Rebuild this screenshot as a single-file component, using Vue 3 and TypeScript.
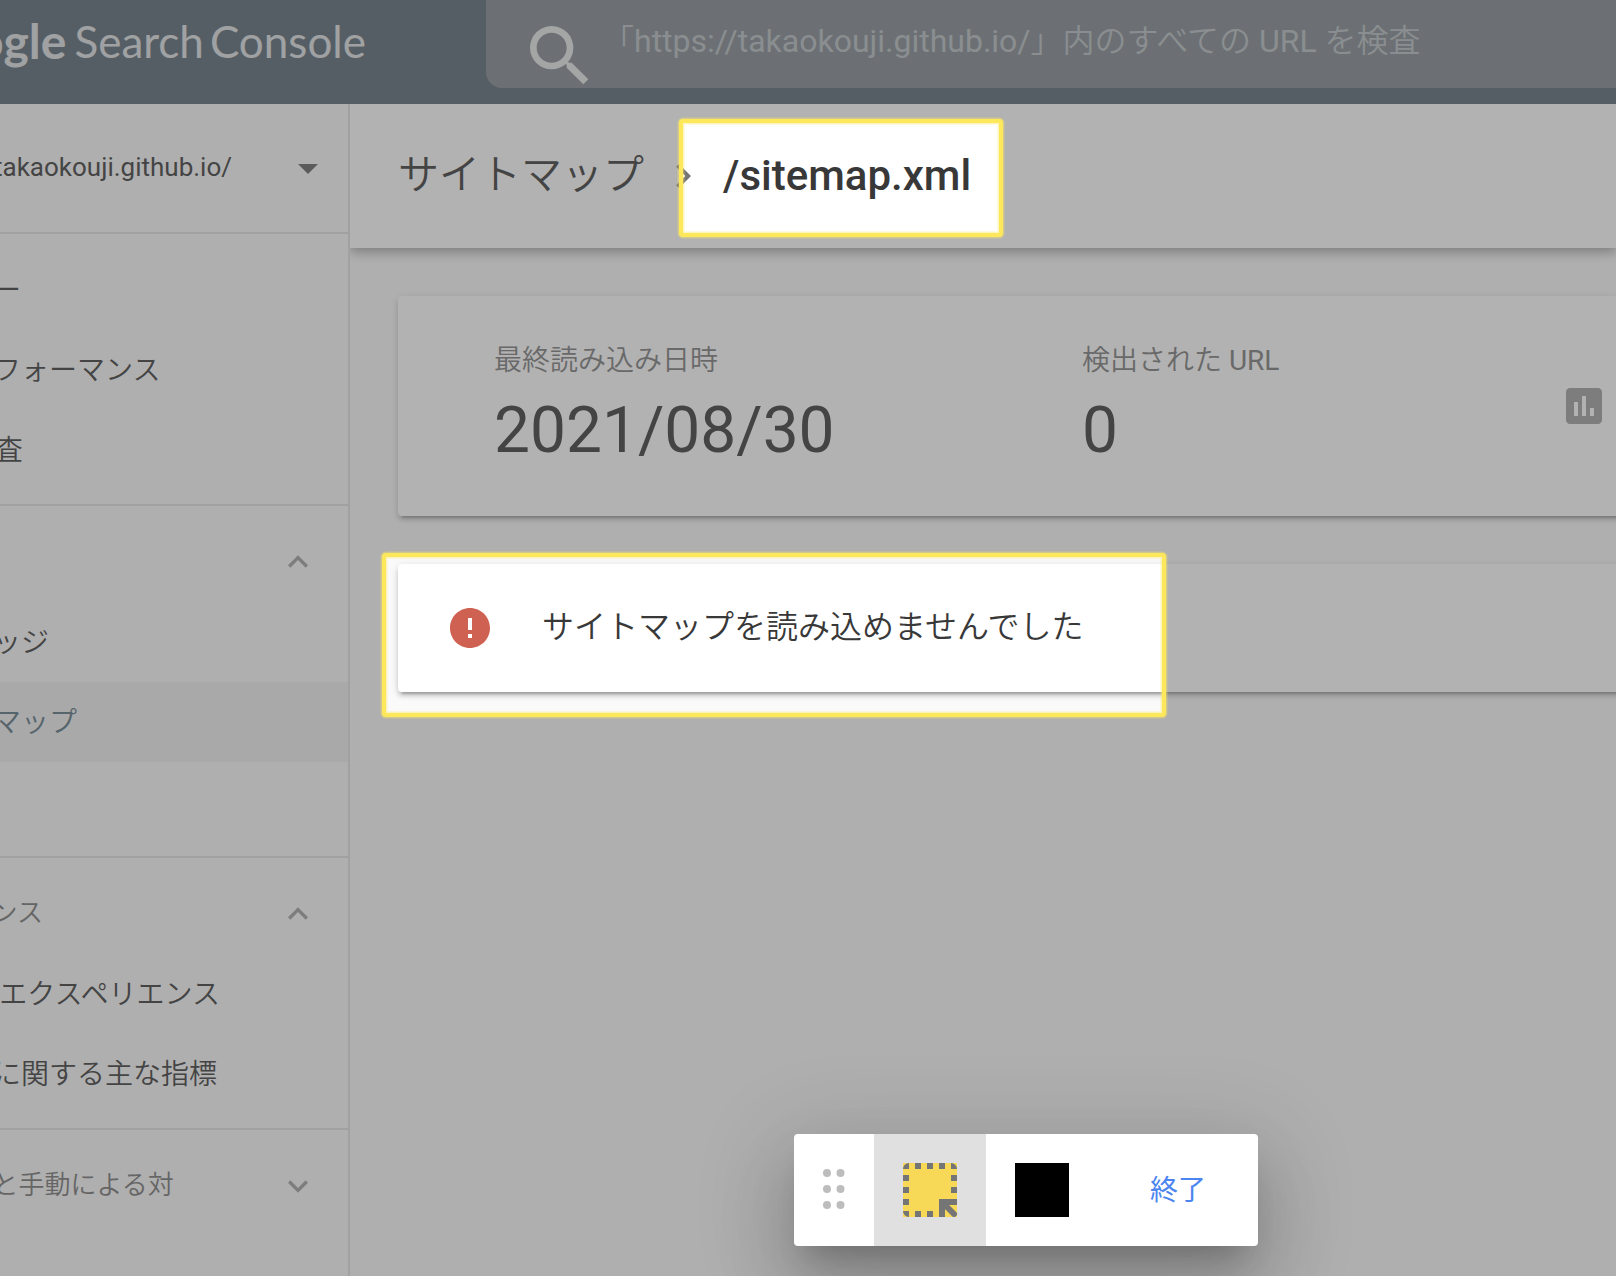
<script setup lang="ts">
interface NavGroup {
  heading?: string
  open?: boolean
  items: { label: string; active?: boolean }[]
}

const groups: NavGroup[] = [
  { items: [{ label: 'サマリー' }, { label: '検索パフォーマンス' }, { label: 'URL 検査' }] },
  {
    heading: 'カバー',
    open: true,
    items: [{ label: 'カバレッジ' }, { label: 'サイトマップ', active: true }, { label: '削除' }],
  },
  {
    heading: 'エクスペリエンス',
    open: true,
    items: [{ label: 'ページ エクスペリエンス' }, { label: 'ウェブに関する主な指標' }],
  },
  { heading: 'セキュリティと手動による対', open: false, items: [] },
]

const stats = [
  { label: '最終読み込み日時', value: '2021/08/30' },
  { label: '検出された URL', value: '0' },
]

const dots = [8, 24, 40]
</script>

<template>
  <div class="page">
    <header class="header">
      <div class="brand">
        <span class="brand-google">Google</span>
        <span>Search</span>
        <span>Console</span>
      </div>
      <label class="search">
        <svg class="search-icon" viewBox="0 0 24 24" aria-hidden="true">
          <path d="M15.5 14h-.79l-.28-.27A6.47 6.47 0 0 0 16 9.5 6.5 6.5 0 1 0 9.5 16c1.61 0 3.09-.59 4.23-1.57l.27.28v.79l5 4.99L20.49 19l-4.99-5zm-6 0C7.01 14 5 11.99 5 9.5S7.01 5 9.5 5 14 7.01 14 9.5 11.99 14 9.5 14z" />
        </svg>
        <input
          type="text"
          aria-label="URL を検査"
          placeholder="「https://takaokouji.github.io/」内のすべての URL を検査"
        />
      </label>
    </header>

    <div class="body">
      <aside class="sidebar">
        <button class="property" type="button">
          <span>https://takaokouji.github.io/</span>
          <svg class="drop" viewBox="0 0 24 24" aria-hidden="true"><path d="M7 10l5 5 5-5z" /></svg>
        </button>
        <nav>
          <section v-for="(group, i) in groups" :key="i" class="group">
            <button v-if="group.heading" class="group-head" type="button">
              <span>{{ group.heading }}</span>
              <svg viewBox="0 0 24 24" aria-hidden="true">
                <path v-if="group.open" d="M12 8l-6 6 1.41 1.41L12 10.83l4.59 4.58L18 14z" />
                <path v-else d="M16.59 8.59L12 13.17 7.41 8.59 6 10l6 6 6-6z" />
              </svg>
            </button>
            <a
              v-for="item in group.items"
              :key="item.label"
              href="#"
              class="item"
              :class="{ active: item.active }"
            >{{ item.label }}</a>
          </section>
        </nav>
      </aside>

      <main class="main">
        <div class="topbar">
          <a class="crumb" href="#">サイトマップ</a>
          <svg class="crumb-sep" viewBox="0 0 24 24" aria-hidden="true">
            <path d="M10 6L8.59 7.41 13.17 12l-4.58 4.59L10 18l6-6z" />
          </svg>
          <h1>/sitemap.xml</h1>
        </div>

        <div class="content">
          <section class="card stats">
            <div v-for="stat in stats" :key="stat.label" class="stat">
              <div class="stat-label">{{ stat.label }}</div>
              <div class="stat-value">{{ stat.value }}</div>
            </div>
            <svg class="chart" viewBox="0 0 24 24" aria-hidden="true">
              <path d="M19 3H5c-1.1 0-2 .9-2 2v14c0 1.1.9 2 2 2h14c1.1 0 2-.9 2-2V5c0-1.1-.9-2-2-2zM9 17H7v-7h2v7zm4 0h-2V7h2v10zm4 0h-2v-4h2v4z" />
            </svg>
          </section>

          <section class="card error">
            <svg class="error-icon" viewBox="0 0 24 24" aria-hidden="true">
              <path d="M12 2C6.48 2 2 6.48 2 12s4.48 10 10 10 10-4.48 10-10S17.52 2 12 2zm1 15h-2v-2h2v2zm0-4h-2V7h2v6z" />
            </svg>
            <p>サイトマップを読み込めませんでした</p>
          </section>
        </div>
      </main>
    </div>

    <!-- Dimmed layer with two highlighted areas -->
    <svg class="dim" aria-hidden="true">
      <path
        fill="#535353"
        fill-opacity="0.447"
        fill-rule="evenodd"
        d="M0 0H6000V6000H0zM681 121H1001V235H681zM384 555H1164V715H384z"
      />
      <g class="glow">
        <rect x="681" y="121" width="320" height="114" rx="2" />
        <rect x="384" y="555" width="780" height="160" rx="2" />
      </g>
      <g class="frame">
        <rect x="681" y="121" width="320" height="114" rx="2" />
        <rect x="384" y="555" width="780" height="160" rx="2" />
      </g>
    </svg>

    <div class="toolbar" role="toolbar">
      <div class="handle">
        <svg viewBox="0 0 22 48" aria-hidden="true">
          <g v-for="y in dots" :key="y"><circle cx="4" :cy="y" r="4" /><circle cx="17.500" :cy="y" r="4" /></g>
        </svg>
      </div>
      <button class="tool selected" type="button" aria-label="ハイライト">
        <svg viewBox="0 0 54 54" aria-hidden="true">
          <path fill="#f8d857" d="M0 0h54v54H0z" />
          <g fill="#757575">
            <path d="M6 0v6H0a6 6 0 0 1 6-6zM48 0a6 6 0 0 1 6 6h-6zM0 48h6v6a6 6 0 0 1-6-6z" />
            <path d="M12 0h6v6h-6zM24 0h6v6h-6zM36 0h6v6h-6zM0 12h6v6H0zM0 24h6v6H0zM0 36h6v6H0zM48 12h6v6h-6zM48 24h6v6h-6zM12 48h6v6h-6zM24 48h6v6h-6z" />
            <path d="M36 36h18v6H42v12h-6z" />
          </g>
          <path d="M42 42l9 9" stroke="#757575" stroke-width="6" stroke-linecap="round" />
        </svg>
      </button>
      <button class="tool" type="button" aria-label="黒塗り"><span class="black"></span></button>
      <button class="done" type="button">終了</button>
    </div>
  </div>
</template>

<style>
body {
  margin: 0;
}
</style>

<style scoped>
.page {
  position: relative;
  display: flex;
  flex-direction: column;
  min-height: 100vh;
  overflow: hidden;
  background: #fafafa;
  color: #383838;
  font-family: Roboto, "Noto Sans CJK JP DemiLight", "Noto Sans CJK JP", sans-serif;
  line-height: 40px;
}

.page * {
  box-sizing: border-box;
}

button {
  border: 0;
  padding: 0;
  background: none;
  color: inherit;
  font: inherit;
  text-align: left;
}

a {
  color: inherit;
  text-decoration: none;
}

svg {
  display: block;
  flex: none;
}

.header {
  position: relative;
  z-index: 1;
  display: flex;
  height: 104px;
  background: #5a6774;
}

.brand {
  display: flex;
  justify-content: flex-end;
  gap: 6px;
  width: 366px;
  margin-right: 120px;
  padding-top: 12px;
  color: #dee0e2;
  font-family: Lato, sans-serif;
  font-size: 44px;
  line-height: 58px;
  white-space: nowrap;
}

.brand-google {
  margin-right: 2px;
  font-size: 48px;
  font-weight: 700;
}

.search {
  display: flex;
  flex: 1;
  min-width: 0;
  height: 88px;
  padding-left: 34px;
  border-radius: 0 0 0 16px;
  background: #80898f;
}

.search-icon {
  width: 80px;
  height: 80px;
  margin: 16px 2px 0 0;
  fill: #e6e8e8;
}

.search input {
  flex: 1;
  min-width: 0;
  height: 82px;
  padding: 0;
  border: 0;
  outline: 0;
  background: none;
  color: #fff;
  font: inherit;
  font-size: 32px;
}

.search input::placeholder {
  color: #b7bec1;
  opacity: 1;
}

.body {
  display: flex;
  flex: 1;
}

.sidebar {
  position: relative;
  z-index: 1;
  width: 564px;
  margin-left: -214px;
  flex: none;
  border-right: 2px solid #e0e0e0;
  background: #fafafa;
}

.property {
  display: flex;
  align-items: center;
  justify-content: flex-end;
  gap: 52px;
  width: 100%;
  height: 130px;
  padding-right: 16px;
  border-bottom: 2px solid #e0e0e0;
  font-size: 26px;
}

.property span {
  padding-bottom: 2px;
}

.drop {
  width: 48px;
  height: 48px;
  fill: #626262;
}

.group {
  padding: 16px 0 14px;
}

.group + .group {
  border-top: 2px solid #e0e0e0;
}

.group-head {
  display: flex;
  align-items: center;
  justify-content: space-between;
  width: 100%;
  height: 80px;
  padding: 0 30px 0 52px;
  color: #757575;
  font-size: 26px;
  font-weight: 350;
}

.group-head span {
  padding-bottom: 2px;
}

.group-head svg {
  width: 40px;
  height: 40px;
  fill: #a0a0a0;
}

.item {
  display: flex;
  align-items: center;
  height: 80px;
  padding: 2px 0 0 123px;
  font-size: 28px;
  font-weight: 350;
}

.item.active {
  background: #efefef;
  color: #59727f;
}

.main {
  flex: 1;
  min-width: 0;
}

.topbar {
  display: flex;
  align-items: center;
  height: 144px;
  padding-left: 48px;
  background: #fff;
  box-shadow: 0 4px 10px rgba(0, 0, 0, 0.3), 0 2px 20px rgba(0, 0, 0, 0.1);
}

.crumb {
  padding-bottom: 2px;
  font-size: 41px;
  font-weight: 350;
}

.crumb-sep {
  width: 48px;
  height: 48px;
  margin: 0 16px 0 15px;
  fill: #757575;
}

h1 {
  margin: 0;
  font-size: 42px;
  font-weight: 500;
}

.content {
  display: flex;
  flex-direction: column;
  gap: 48px;
  margin-right: -8px;
  padding: 48px 0 48px 48px;
}

.card {
  display: flex;
  align-items: center;
  border-radius: 4px;
  background: #fff;
  box-shadow: 0 6px 2px -4px rgba(0, 0, 0, 0.2), 0 4px 4px rgba(0, 0, 0, 0.14),
    0 2px 10px rgba(0, 0, 0, 0.12);
}

.stats {
  height: 220px;
  padding: 0 16px 0 96px;
}

.stat {
  flex: none;
  width: 588px;
}

.stat:nth-of-type(2) {
  flex: 1;
  min-width: 0;
}

.stat-label {
  color: #7b7b7b;
  font-size: 28px;
}

.stat-value {
  margin-top: 10px;
  font-size: 64px;
  line-height: 80px;
}

.chart {
  width: 48px;
  height: 48px;
  margin-left: auto;
  fill: #a0a0a0;
}

.error {
  height: 128px;
  padding-left: 48px;
  font-size: 32px;
  font-weight: 350;
}

.error-icon {
  width: 48px;
  height: 48px;
  margin-right: 48px;
  fill: #cf6152;
}

p {
  margin: 0;
  padding-bottom: 2px;
}

.dim {
  position: absolute;
  inset: 0;
  z-index: 2;
  width: 100%;
  height: 100%;
  pointer-events: none;
}

.dim rect {
  fill: none;
}

.glow {
  stroke: rgba(253, 232, 92, 0.4);
  stroke-width: 7px;
}

.frame {
  stroke: #fde85c;
  stroke-width: 4px;
}

.toolbar {
  position: absolute;
  bottom: 30px;
  left: 794px;
  z-index: 3;
  display: flex;
  width: 464px;
  height: 112px;
  border-radius: 4px;
  background: #fff;
  box-shadow: 0 22px 30px -14px rgba(0, 0, 0, 0.2), 0 48px 76px 6px rgba(0, 0, 0, 0.14),
    0 18px 92px 16px rgba(0, 0, 0, 0.12);
}

.handle,
.tool,
.done {
  display: flex;
  align-items: center;
  justify-content: center;
}

.handle {
  width: 80px;
  padding-bottom: 2px;
}

.handle svg {
  width: 22px;
  height: 48px;
  fill: #bdbdbd;
}

.tool {
  width: 112px;
}

.tool svg,
.black {
  width: 54px;
  height: 54px;
}

.selected {
  background: #e0e0e0;
}

.black {
  background: #000;
}

.done {
  flex: 1;
  padding-top: 2px;
  color: #4c84f0;
  font-family: Roboto, "Noto Sans CJK JP", sans-serif;
  font-size: 28px;
}
</style>
